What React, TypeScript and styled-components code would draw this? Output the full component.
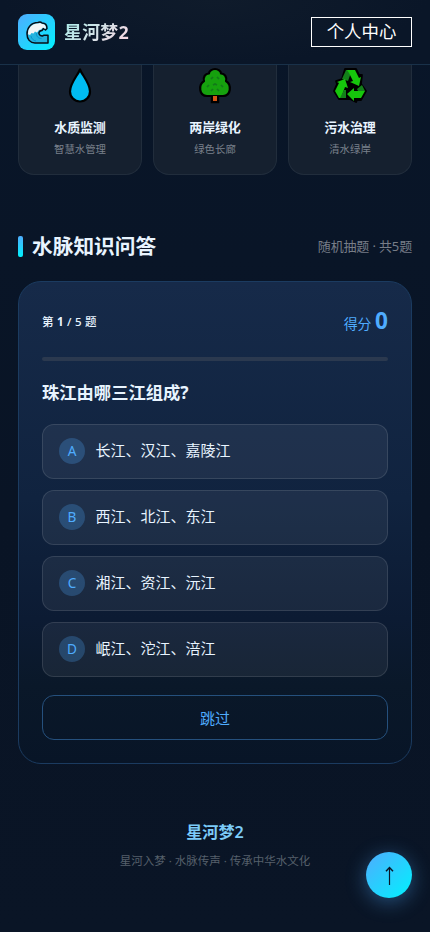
import React from "react";
import styled, { createGlobalStyle } from "styled-components";

const GlobalStyle = createGlobalStyle`
  * { box-sizing: border-box; }
  html, body { margin: 0; padding: 0; background: #091526; }
  body, button {
    font-family: "Noto Sans", "Noto Sans CJK SC", sans-serif;
  }
  button { margin: 0; cursor: pointer; }
`;

const Page = styled.div`
  height: 932px;
  overflow: hidden;
  color: #e8f4ff;
  background: linear-gradient(180deg, #091629 0%, #091425 55%, #0a1526 100%);
`;

const Header = styled.header`
  height: 65px;
  padding: 0 18px;
  display: flex;
  align-items: center;
  justify-content: space-between;
  border-bottom: 1px solid #193149;
  background: radial-gradient(ellipse at 50% 0, #0f1b2b, #0a1628 70%);
`;

const Brand = styled.div`
  display: flex;
  align-items: center;
  gap: 9px;
`;

const Logo = styled.div`
  width: 37px;
  height: 36px;
  border-radius: 9px;
  display: grid;
  place-items: center;
  background: linear-gradient(135deg, #4facfe, #00f2fe);
`;

const BrandName = styled.span`
  margin-bottom: 1px;
  font-size: 17.9px;
  line-height: 26px;
  font-weight: 700;
  letter-spacing: 0.25px;
  color: transparent;
  background: linear-gradient(135deg, #a8edea, #fed6e3);
  background-clip: text;
  -webkit-background-clip: text;
`;

const CenterButton = styled.button`
  width: 101px;
  height: 30px;
  margin-bottom: 1px;
  padding: 0 0 2px;
  border: 1px solid #fff;
  background: transparent;
  color: #fff;
  font-size: 17.4px;
  line-height: 26px;
`;

const Main = styled.main`
  padding: 0 18px;
`;

const FeatureGrid = styled.section`
  display: grid;
  grid-template-columns: repeat(3, 1fr);
  gap: 11px;
`;

const Feature = styled.article`
  height: 110px;
  border: 1px solid #212d3c;
  border-top: 0;
  border-radius: 0 0 16px 16px;
  background: #15202f;
  display: flex;
  flex-direction: column;
  align-items: center;

  svg { margin-top: 1px; }
`;

const FeatureName = styled.div`
  margin-top: 13px;
  font-size: 13px;
  line-height: 20px;
  font-weight: 700;
  letter-spacing: -0.15px;
`;

const FeatureNote = styled.div`
  margin-top: 4px;
  font-size: 10.4px;
  line-height: 16px;
  color: #7a818c;
`;

const SectionHead = styled.div`
  height: 32px;
  margin-top: 55px;
  display: flex;
  align-items: center;
  justify-content: space-between;
`;

const SectionTitle = styled.h2`
  margin: 0;
  display: flex;
  align-items: center;
  gap: 9px;
  font-size: 20.7px;
  line-height: 30px;
  font-weight: 700;

  &::before {
    content: "";
    width: 5px;
    height: 21px;
    border-radius: 2px;
    background: linear-gradient(180deg, #4facfe, #00f2fe);
  }
`;

const SectionNote = styled.span`
  font-size: 13px;
  line-height: 20px;
  letter-spacing: -0.15px;
  color: #777d87;
`;

const Quiz = styled.section`
  height: 483px;
  margin-top: 19px;
  padding: 23px;
  border: 1px solid #1b3b60;
  border-radius: 23px;
  background: linear-gradient(180deg, #162a49 0%, #10233f 45%, #0c1b33 70%, #0a1829 84%, #081527 100%);
`;

const QuizTop = styled.div`
  height: 34px;
  display: flex;
  align-items: center;
  justify-content: space-between;
`;

const Progress = styled.span`
  font-size: 11.5px;
  line-height: 18px;
  font-weight: 500;
  letter-spacing: 0.25px;
  b { font-weight: 700; }
`;

const Score = styled.span`
  font-size: 13.9px;
  line-height: 30px;
  color: #4facfe;
  b { font-size: 22.6px; font-weight: 700; }
`;

const Track = styled.div`
  height: 4px;
  margin-top: 18px;
  border-radius: 2px;
  background: #2b394f;
`;

const Question = styled.h3`
  margin: 19px 0 0;
  font-size: 17.3px;
  line-height: 25px;
  font-weight: 700;
`;

const Options = styled.div`
  margin-top: 19px;
  display: grid;
  gap: 11.5px;
`;

const Option = styled.button`
  height: 54.5px;
  width: 100%;
  padding: 0 16px;
  display: flex;
  align-items: center;
  gap: 10.5px;
  text-align: left;
  font-size: 15px;
  color: #e8f4ff;
  border: 1px solid rgba(255, 255, 255, 0.11);
  border-radius: 12px;
  background: rgba(255, 255, 255, 0.06);
`;

const OptionText = styled.span`
  line-height: 22px;
  padding-bottom: 2px;
`;

const Letter = styled.span`
  width: 26px;
  height: 26px;
  border-radius: 50%;
  display: grid;
  place-items: center;
  font-size: 13.6px;
  line-height: 26px;
  color: #4facfe;
  background: rgba(79, 172, 254, 0.25);
`;

const Skip = styled.button`
  width: 100%;
  height: 45px;
  margin-top: 18.500px;
  padding: 0;
  border: 1px solid #25507d;
  border-radius: 12px;
  background: transparent;
  color: #4facfe;
  font-size: 15px;
`;

const Footer = styled.footer`
  margin-top: 56px;
  display: flex;
  flex-direction: column;
  align-items: center;
`;

const FooterName = styled.div`
  font-size: 16.1px;
  line-height: 24px;
  font-weight: 600;
  color: #7ccbf8;
`;

const FooterNote = styled.div`
  margin-top: 8px;
  font-size: 11.5px;
  line-height: 17px;
  color: #56606b;
`;

const ToTop = styled.button`
  position: fixed;
  right: 18px;
  bottom: 34px;
  width: 46px;
  height: 46px;
  padding: 0;
  display: grid;
  place-items: center;
  border: 0;
  border-radius: 50%;
  color: #0a1628;
  background: linear-gradient(135deg, #4facfe, #00f2fe);
  box-shadow: 0 4px 20px rgba(79, 172, 254, 0.4);
`;

const WaveIcon = () => (
  <svg width="26" height="26" viewBox="0 0 26 26">
    <path d="M24 24H11C6 24 3 20 3 15 3 9 7 3.500 14 3.500c1.500-.8 3-.6 4 .5 3 0 5 2 5 5.500l-1.500 1.500-2-1.500-1.500 2c-1.500 0-2.500.8-3 2-.5 2 1.500 3.500 3.500 3.500L20 16.200h4Z" fill="#23b4df" stroke="#080e16" strokeWidth="1.500" strokeLinejoin="round" />
    <path d="M4 15C4 9 8 4.500 14 4.500l2-.4 2 1c2.500 0 4 1.500 4 4.200l-1 .5-2-1.300-2 2-2 .5-2 2.500-2-1-1.500 2-2-.6-1.500 2-2-.6Z" fill="#f1f6f7" />
    <path d="M12.500 14c-.5 3 1.500 5.500 5 5.500M7 17c.5 3 2.500 4.500 5 5" fill="none" stroke="#0795d0" strokeWidth="1" />
  </svg>
);

const DropIcon = () => (
  <svg width="36" height="38" viewBox="0 0 36 38">
    <path d="M18 3.500C16 9 8 17 8 25.500a10 10 0 0 0 20 0C28 17 20 9 18 3.500Z" fill="#00bcf2" stroke="#000" strokeWidth="2.200" strokeLinejoin="round" />
  </svg>
);

const TreeIcon = () => (
  <svg width="36" height="38" viewBox="0 0 36 38">
    <path d="M15 29h6v7h-6z" fill="#d45614" stroke="#000" strokeWidth="2.500" />
    <path d="M12 7.500c0-2.500 3-4.500 6-4.500s6 2 6 4.500c4 0 6 4 5 7.500 6 4 5 15-3 15H10C2 30 1 19 7 15 6 11.500 8 7.500 12 7.500Z" fill="#16a10e" stroke="#000" strokeWidth="2.200" strokeLinejoin="round" />
    <path d="m14 13 2-2m4 0 2 2M10 21l2-2m4 0 2-1 2 1m4 0 2 2m-12 4 2-2m4 0 2 2" fill="none" stroke="#13791a" strokeWidth="1.700" />
    <path d="M16 30h4v5h-4z" fill="#d45614" />
  </svg>
);

const RecycleIcon = () => (
  <svg width="36" height="38" viewBox="0 0 36 38">
    <path d="M13 3h11l3 6 3 0-1 9 5 7-5 9h-4l-1 2-6-3H7L2 25l3-7-1-3 6-2Z" fill="#000" stroke="#000" strokeWidth="1.800" strokeLinejoin="round" />
    <path d="m14 4-4 9 6 2 4-11Z" fill="#13801a" />
    <path d="M15 4h8l4 8 2-1-2 9-9-4 3-1-4-8Z" fill="#16c60c" />
    <path d="m5 16 8-3 3 9-3-1-4 11H7l-4-7 4-8Z" fill="#16c60c" />
    <path d="m12 24-4 8h6v-8Z" fill="#13801a" />
    <path d="m15 28 7-6v3h11l-4 7h-7v3Z" fill="#16c60c" />
    <path d="m25 23 5-4 3 6h-7Z" fill="#13801a" />
  </svg>
);

const ArrowIcon = () => (
  <svg width="16" height="22" viewBox="0 0 16 22">
    <path d="M8.500 21V4" fill="none" stroke="#0a1628" strokeWidth="1.200" />
    <path d="M5 7.200 8.500 3.500 12 7.200" fill="none" stroke="#0a1628" strokeWidth="1.500" />
  </svg>
);

const features = [
  { name: "水质监测", note: "智慧水管理", icon: <DropIcon /> },
  { name: "两岸绿化", note: "绿色长廊", icon: <TreeIcon /> },
  { name: "污水治理", note: "清水绿岸", icon: <RecycleIcon /> },
];

const options = [
  "长江、汉江、嘉陵江",
  "西江、北江、东江",
  "湘江、资江、沅江",
  "岷江、沱江、涪江",
];

export default function App() {
  return (
    <Page lang="zh-CN">
      <GlobalStyle />
      <Header>
        <Brand>
          <Logo><WaveIcon /></Logo>
          <BrandName>星河梦2</BrandName>
        </Brand>
        <CenterButton>个人中心</CenterButton>
      </Header>
      <Main>
        <FeatureGrid>
          {features.map((f) => (
            <Feature key={f.name}>
              {f.icon}
              <FeatureName>{f.name}</FeatureName>
              <FeatureNote>{f.note}</FeatureNote>
            </Feature>
          ))}
        </FeatureGrid>
        <SectionHead>
          <SectionTitle>水脉知识问答</SectionTitle>
          <SectionNote>随机抽题 · 共5题</SectionNote>
        </SectionHead>
        <Quiz>
          <QuizTop>
            <Progress>第 <b>1</b> / 5 题</Progress>
            <Score>得分 <b>0</b></Score>
          </QuizTop>
          <Track />
          <Question>珠江由哪三江组成?</Question>
          <Options>
            {options.map((text, i) => (
              <Option key={text}>
                <Letter>{"ABCD"[i]}</Letter>
                <OptionText>{text}</OptionText>
              </Option>
            ))}
          </Options>
          <Skip>跳过</Skip>
        </Quiz>
      </Main>
      <Footer>
        <FooterName>星河梦2</FooterName>
        <FooterNote>星河入梦 · 水脉传声 · 传承中华水文化</FooterNote>
      </Footer>
      <ToTop aria-label="回到顶部"><ArrowIcon /></ToTop>
    </Page>
  );
}
